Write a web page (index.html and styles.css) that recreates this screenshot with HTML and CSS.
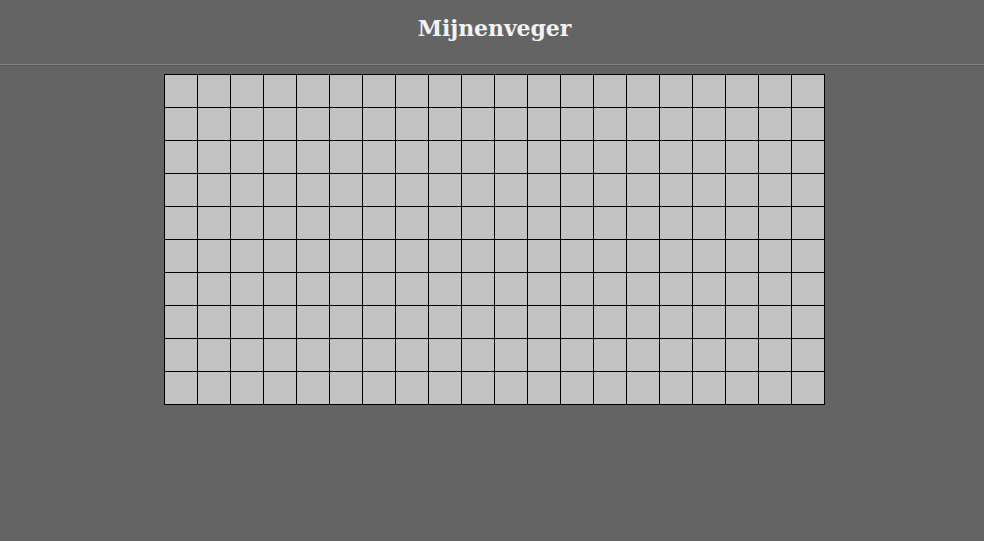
FILE: index.html
```html
<!DOCTYPE html>
<html lang="nl">
<head>
<meta charset="utf-8">
<title>Mijnenveger</title>
<link rel="stylesheet" href="styles.css">
</head>
<body>
<header class="header">
  <h1 class="title">Mijnenveger</h1>
</header>
<main class="main">
  <div class="board" id="board"></div>
</main>
<script src="script.js"></script>
</body>
</html>
```
FILE: styles.css
```css
html, body {
  margin: 0;
  padding: 0;
  background: #646464;
}
body {
  font-family: "DejaVu Serif", serif;
}
.header {
  height: 65px;
  box-sizing: border-box;
  border-bottom: 1px solid #828282;
  box-shadow: 0 1px 0 #5c5c5c;
  display: flex;
  justify-content: center;
  padding: 13px 0 0 5px;
}
.title {
  margin: 0;
  color: #f2f2f2;
  font-size: 22px;
  line-height: 30px;
  font-weight: bold;
  letter-spacing: -0.1px;
}
.main {
  display: flex;
  justify-content: center;
  padding: 9px 0 0 5px;
}
.board {
  display: grid;
  grid-template-columns: repeat(20, 32px);
  grid-auto-rows: 32px;
  gap: 1px;
  background: #000;
  border: 1px solid #000;
}
.cell {
  background: #c2c2c2;
}
```
FILE: script.js
```js
const board = document.getElementById('board');
for (let i = 0; i < 200; i++) {
  const c = document.createElement('div');
  c.className = 'cell';
  board.appendChild(c);
}
```
